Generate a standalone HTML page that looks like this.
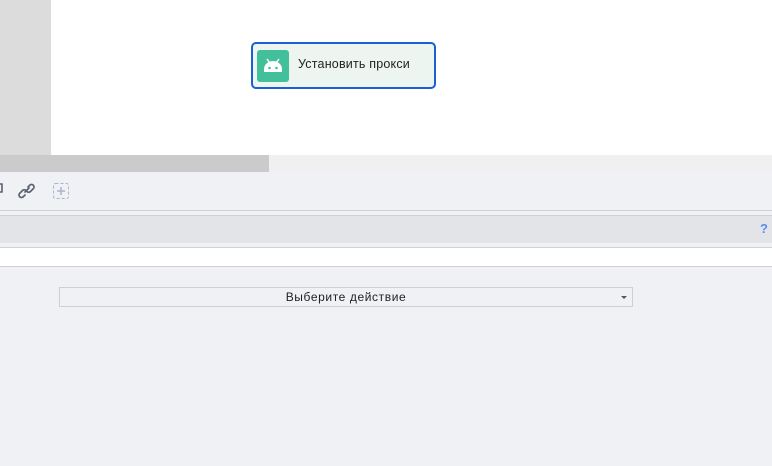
<!DOCTYPE html>
<html><head><style>
body{margin:0;width:772px;height:466px;overflow:hidden;background:#f0f1f5;font-family:"Liberation Sans",sans-serif;position:relative}
div{position:absolute;box-sizing:border-box}
</style></head><body>
<div style="left:0;top:0;width:772px;height:155px;background:#fff"></div>
<div style="left:0;top:0;width:51px;height:155px;background:#dcdcdc"></div>
<div style="left:0;top:155px;width:772px;height:17px;background:#f0f0f0"></div>
<div style="left:0;top:155px;width:269px;height:17px;background:#cbcbcb"></div>
<div style="left:251px;top:42px;width:185px;height:47px;border:2px solid #1a5fd6;border-radius:5px;background:#edf5f1"></div>
<div style="left:257px;top:50px;width:32px;height:32px;border-radius:3px;background:#42bf9b">
<svg width="32" height="32" viewBox="0 0 32 32"><path d="M7 22 V19 a9 8 0 0 1 18 0 V22 Z" fill="#fff"/><line x1="10" y1="9" x2="12.5" y2="12.5" stroke="#fff" stroke-width="1.5"/><line x1="22" y1="9" x2="19.5" y2="12.5" stroke="#fff" stroke-width="1.5"/><circle cx="12.5" cy="18" r="1.3" fill="#42bf9b"/><circle cx="19.5" cy="18" r="1.3" fill="#42bf9b"/></svg></div>
<div style="left:298px;top:57px;font-size:12.5px;color:#222;letter-spacing:0.2px">Установить прокси</div>
<svg style="position:absolute;left:0;top:180px" width="80" height="22">
<path d="M0 4 h2 v8 h-2" stroke="#5a6270" stroke-width="1.6" fill="none"/>
<path d="M25 15 l-2 2 a2.5 2.5 0 0 1 -3.5 -3.5 l3 -3 a2.5 2.5 0 0 1 3.5 0 M28 7 l2 -2 a2.5 2.5 0 0 1 3.5 3.5 l-3 3 a2.5 2.5 0 0 1 -3.5 0 M25 12 l4 -4" stroke="#5a6270" stroke-width="1.7" fill="none" stroke-linecap="round"/>
<rect x="53.5" y="3.5" width="15" height="15" rx="2" stroke="#aab3cc" stroke-dasharray="3 2" fill="none"/>
<path d="M61 7 v8 M57 11 h8" stroke="#aab3cc" stroke-width="1.5"/>
</svg>
<div style="left:0;top:210px;width:772px;height:1px;background:#d0d1d6"></div>
<div style="left:0;top:215px;width:772px;height:28px;background:#e3e4e8;border-top:1px solid #d0d1d6"></div>
<div style="left:760px;top:221px;font-size:13px;color:#5b8def;font-weight:bold">?</div>
<div style="left:0;top:247px;width:772px;height:20px;background:#fff;border-top:1px solid #d0d1d6;border-bottom:1px solid #d0d1d6"></div>
<div style="left:59px;top:287px;width:574px;height:20px;border:1px solid #cfd0d4;background:#f0f1f5;font-size:12px;color:#222;text-align:center;line-height:18px;letter-spacing:0.6px">Выберите действие</div>
<div style="left:621px;top:296px;width:0;height:0;border-left:3px solid transparent;border-right:3px solid transparent;border-top:3px solid #555"></div>
</body></html>
